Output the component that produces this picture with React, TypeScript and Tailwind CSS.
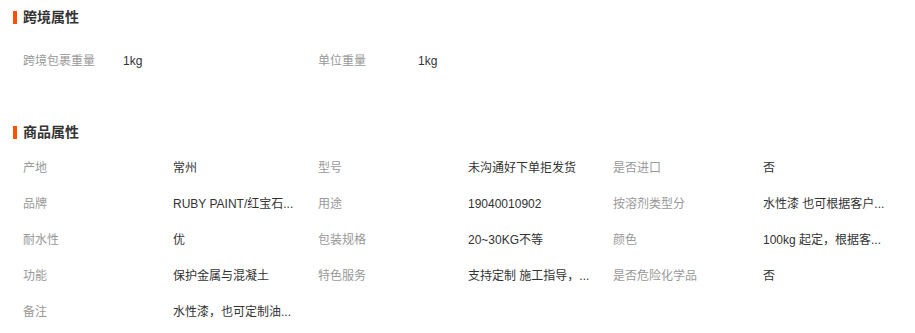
const font = { fontFamily: '"Liberation Sans", "Noto Sans CJK SC", sans-serif' };

const crossBorder = [
  { label: "跨境包裹重量", value: "1kg" },
  { label: "单位重量", value: "1kg" },
];

const attrs = [
  { label: "产地", value: "常州" },
  { label: "型号", value: "未沟通好下单拒发货" },
  { label: "是否进口", value: "否" },
  { label: "品牌", value: "RUBY PAINT/红宝石..." },
  { label: "用途", value: "19040010902" },
  { label: "按溶剂类型分", value: "水性漆 也可根据客户..." },
  { label: "耐水性", value: "优" },
  { label: "包装规格", value: "20~30KG不等" },
  { label: "颜色", value: "100kg 起定，根据客..." },
  { label: "功能", value: "保护金属与混凝土" },
  { label: "特色服务", value: "支持定制 施工指导，..." },
  { label: "是否危险化学品", value: "否" },
  { label: "备注", value: "水性漆，也可定制油..." },
];

const Heading = ({ title }: { title: string }) => (
  <div className="flex items-center h-[34px]">
    <span className="w-[4px] h-[13px] bg-[#ff5000] mr-[6px]" />
    <h2 className="text-[14px] font-bold text-[#333]">{title}</h2>
  </div>
);

export default function App() {
  return (
    <div className="w-[915px] h-[333px] bg-white pl-[13px] text-[12px] overflow-hidden" style={font}>
      <Heading title="跨境属性" />
      <div className="grid grid-cols-[100px_195px_100px_195px] pl-[10px] mt-[8px]">
        {crossBorder.map((a, i) => (
          <div key={i} className="contents">
            <div className="h-[36px] pt-[2px] flex items-center text-[#999]">{a.label}</div>
            <div className="h-[36px] pt-[2px] flex items-center text-[#333]">{a.value}</div>
          </div>
        ))}
      </div>
      <div className="h-[37px]" />
      <Heading title="商品属性" />
      <div className="grid grid-cols-[150px_145px_150px_145px_150px_145px] pl-[10px]">
        {attrs.map((a, i) => (
          <div key={i} className="contents">
            <div className="h-[36px] pt-[2px] flex items-center text-[#999] whitespace-nowrap">{a.label}</div>
            <div className="h-[36px] pt-[2px] flex items-center text-[#333] whitespace-nowrap">{a.value}</div>
          </div>
        ))}
      </div>
    </div>
  );
}
